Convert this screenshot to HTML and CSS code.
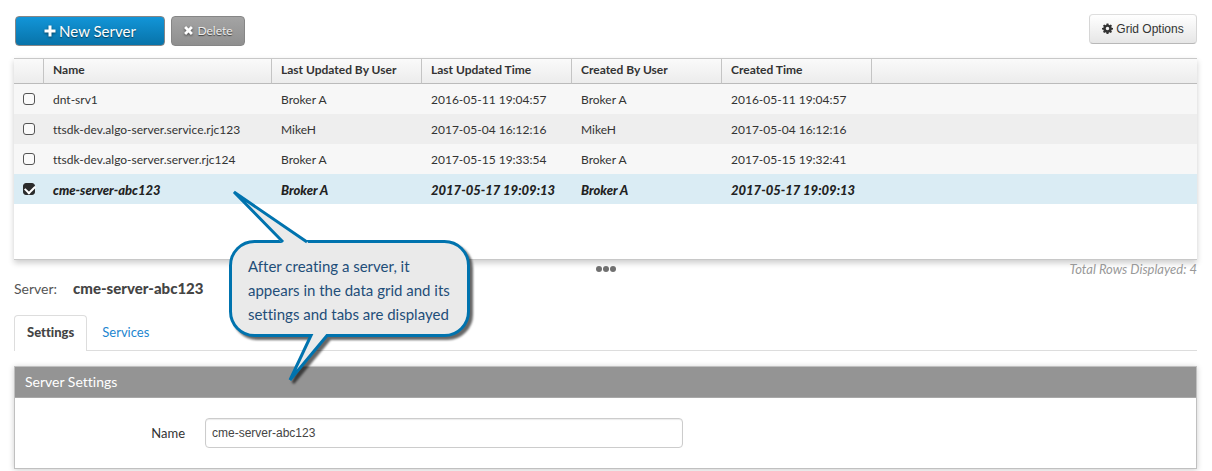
FILE: index.html
```html
<!DOCTYPE html>
<html lang="en">
<head>
    <meta charset="UTF-8">
    <meta name="viewport" content="width=device-width, initial-scale=1.0">
    <title>Servers</title>
    <link rel="stylesheet" href="styles.css">
</head>
<body>
    <!-- Toolbar -->
    <div class="toolbar">
        <button type="button" class="btn btn-primary">
            <svg class="icon-plus" viewBox="0 0 12 12" aria-hidden="true"><path d="M4.500 .5h3v4h4v3h-4v4h-3v-4h-4v-3h4z"/></svg>
            New Server
        </button>
        <button type="button" class="btn btn-delete">
            <svg class="icon-small" viewBox="0 0 10 10" aria-hidden="true"><path d="M2.800 1 5 3.200 7.200 1 9 2.800 6.800 5 9 7.200 7.200 9 5 6.800 2.800 9 1 7.200 3.200 5 1 2.800z"/></svg>
            Delete
        </button>
        <button type="button" class="btn btn-options">
            <svg class="icon-gear" viewBox="0 0 12 12" aria-hidden="true"><path fill-rule="evenodd" d="M5 .5h2l.3 1.500 1 .4 1.300-.8 1.300 1.300-.8 1.300.4 1 1.500.3v1.500l-1.500.4-.4 1 .8 1.200-1.300 1.300-1.300-.8-1 .4-.3 1.500h-2l-.3-1.500-1-.4-1.300.8-1.300-1.300.8-1.200-.4-1-1.500-.4v-1.500l1.500-.3.4-1-.8-1.300 1.300-1.300 1.300.8 1-.4zM6 4.200a1.900 1.900 0 1 0 0 3.800 1.900 1.900 0 0 0 0-3.800z"/></svg>
            Grid Options
        </button>
    </div>

    <!-- Data Grid -->
    <div class="grid">
        <table>
            <colgroup>
                <col class="col-check">
                <col class="col-name">
                <col class="col-data">
                <col class="col-data">
                <col class="col-data">
                <col class="col-data">
                <col>
            </colgroup>
            <thead>
                <tr>
                    <th></th>
                    <th>Name</th>
                    <th>Last Updated By User</th>
                    <th>Last Updated Time</th>
                    <th>Created By User</th>
                    <th>Created Time</th>
                    <th></th>
                </tr>
            </thead>
            <tbody>
                <tr>
                    <td><input type="checkbox" aria-label="Select dnt-srv1"></td>
                    <td>dnt-srv1</td>
                    <td>Broker A</td>
                    <td>2016-05-11 19:04:57</td>
                    <td>Broker A</td>
                    <td>2016-05-11 19:04:57</td>
                    <td></td>
                </tr>
                <tr>
                    <td><input type="checkbox" aria-label="Select ttsdk-dev.algo-server.service.rjc123"></td>
                    <td>ttsdk-dev.algo-server.service.rjc123</td>
                    <td>MikeH</td>
                    <td>2017-05-04 16:12:16</td>
                    <td>MikeH</td>
                    <td>2017-05-04 16:12:16</td>
                    <td></td>
                </tr>
                <tr>
                    <td><input type="checkbox" aria-label="Select ttsdk-dev.algo-server.server.rjc124"></td>
                    <td>ttsdk-dev.algo-server.server.rjc124</td>
                    <td>Broker A</td>
                    <td>2017-05-15 19:33:54</td>
                    <td>Broker A</td>
                    <td>2017-05-15 19:32:41</td>
                    <td></td>
                </tr>
                <tr class="selected">
                    <td><input type="checkbox" aria-label="Select cme-server-abc123" checked></td>
                    <td>cme-server-abc123</td>
                    <td>Broker A</td>
                    <td>2017-05-17 19:09:13</td>
                    <td>Broker A</td>
                    <td>2017-05-17 19:09:13</td>
                    <td></td>
                </tr>
            </tbody>
        </table>
    </div>

    <!-- Splitter and row count -->
    <div class="grid-footer">
        <div class="splitter"><span></span><span></span><span></span></div>
        <div class="total">Total Rows Displayed: 4</div>
    </div>

    <div class="server-title">Server: <strong>cme-server-abc123</strong></div>

    <!-- Tabs -->
    <nav class="tabs">
        <a href="#settings" class="active">Settings</a>
        <a href="#services">Services</a>
    </nav>

    <!-- Settings Form -->
    <section class="panel" id="settings">
        <h2>Server Settings</h2>
        <form class="form-row">
            <label for="server-name">Name</label>
            <input type="text" id="server-name" value="cme-server-abc123">
        </form>
    </section>

    <!-- Callout -->
    <div class="callout">
        <svg viewBox="0 0 250 205" aria-hidden="true">
            <path class="bubble" d="M29.500 56.500H219.500A24 24 0 0 1 243.500 80.500V126.500A24 24 0 0 1 219.500 150.500H102L65 195 86 150.500H29.500A24 24 0 0 1 5.500 126.500V80.500A24 24 0 0 1 29.500 56.500z"/>
            <path class="tail-fill" d="M58 59 9 7 81 55 84 59z"/>
            <path class="tail-line" d="M58 57 9 7 82 57"/>
        </svg>
        <p>After creating a server, it<br>appears in the data grid and its<br>settings and tabs are displayed</p>
    </div>
</body>
</html>
```
FILE: styles.css
```css
/* General Styles */
* {
    margin: 0;
    padding: 0;
    box-sizing: border-box;
}

body {
    position: relative;
    padding: 14px 15px 2px 14px;
    font-family: Lato, "Liberation Sans", sans-serif;
    font-size: 13px;
    font-variant-ligatures: none;
    line-height: 20px;
    color: #333;
    background: #fff;
}

/* Toolbar */
.toolbar {
    display: flex;
    align-items: flex-end;
    gap: 6px;
    height: 32px;
    margin-bottom: 12px;
    padding-left: 1px;
}

.btn {
    display: flex;
    align-items: center;
    justify-content: center;
    height: 30px;
    padding-bottom: 1px;
    border: 1px solid #868686;
    border-radius: 4px;
    font-family: inherit;
    font-size: 12px;
    white-space: nowrap;
    cursor: pointer;
}

.btn svg {
    fill: currentColor;
}

.btn-primary {
    gap: 3px;
    width: 150px;
    font-size: 15px;
    color: #fff;
    text-shadow: 0 1px 1px rgba(0, 0, 0, 0.5);
    background: linear-gradient(#1295d8, #0873a9);
}

.btn-delete {
    gap: 3px;
    width: 74px;
    color: #eee;
    text-shadow: 0 1px 1px rgba(0, 0, 0, 0.6);
    background: linear-gradient(#a4a4a4, #8f8f8f);
}

.btn-primary svg,
.btn-delete svg {
    color: #fff;
    filter: drop-shadow(0 1px 1px rgba(0, 0, 0, 0.5));
}

.btn-options {
    align-self: flex-start;
    gap: 3px;
    width: 108px;
    margin-left: auto;
    border-color: #dedede #d6d6d6 #b8b8b8;
    font-family: "Liberation Sans", Arial, sans-serif;
    color: #333;
    background: linear-gradient(#fff, #e6e6e6);
}

.icon-plus {
    width: 12px;
    height: 12px;
}

.icon-small,
.icon-gear {
    width: 11px;
    height: 11px;
}

/* Data Grid */
.grid {
    height: 202px;
    border-top: 1px solid #c8c8c8;
    border-bottom: 1px solid #c8c8c8;
    background: #fff;
    box-shadow: 0 3px 6px rgba(0, 0, 0, 0.2);
}

table {
    width: 100%;
    table-layout: fixed;
    border-collapse: separate;
    border-spacing: 0;
}

.col-check {
    width: 30px;
}

.col-name {
    width: 228px;
}

.col-data {
    width: 150px;
}

th {
    height: 25px;
    padding: 0 0 2px 9px;
    border-right: 1px solid #c4c4c4;
    border-bottom: 1px solid #bbb;
    font-size: 12px;
    font-weight: 700;
    text-align: left;
    line-height: 20px;
    background: linear-gradient(#fafafa, #ececec);
}

th:last-child {
    border-right: 0;
}

td {
    height: 30px;
    padding: 2px 0 0 9px;
    font-size: 12px;
    line-height: 20px;
    white-space: nowrap;
    background: #f7f7f7;
}

tr:nth-child(even) td {
    background: #eee;
}

tr.selected td {
    font-size: 13px;
    font-style: italic;
    font-weight: 900;
    color: #222;
    background: #daecf4;
}

input[type="checkbox"] {
    display: block;
    position: relative;
    width: 12px;
    height: 12px;
    margin-bottom: 2px;
    border: 1px solid #555;
    border-radius: 3px;
    appearance: none;
    background: #fafafa;
}

input[type="checkbox"]:checked {
    border-color: #2b2b2b;
    background: #2b2b2b;
}

input[type="checkbox"]:checked::after {
    content: "";
    position: absolute;
    top: 1px;
    left: 1px;
    width: 8px;
    height: 5px;
    border: solid #fff;
    border-width: 0 0 2px 2px;
    transform: rotate(-45deg);
}

.grid-footer {
    display: grid;
    grid-template-columns: 1fr auto 1fr;
    height: 18px;
}

.splitter {
    display: flex;
    grid-column: 2;
    gap: 1px;
    padding-top: 6px;
}

.splitter span {
    width: 6px;
    height: 6px;
    border-radius: 50%;
    background: #707070;
}

.total {
    justify-self: end;
    font-style: italic;
    line-height: 18px;
    color: #999;
}

/* Server Title */
.server-title {
    display: flex;
    align-items: baseline;
    gap: 16px;
    height: 20px;
    margin-bottom: 17px;
    font-size: 14px;
    color: #555;
}

.server-title strong {
    font-size: 15px;
    font-weight: 900;
    color: #444;
}

/* Tabs */
.tabs {
    display: flex;
    height: 36px;
    margin-bottom: 15px;
    border-bottom: 1px solid #ddd;
}

.tabs a {
    height: 36px;
    padding: 0 15px;
    line-height: 35px;
    color: #1c86cf;
    text-decoration: none;
}

.tabs a.active {
    padding: 0 12px;
    border: 1px solid #ddd;
    border-bottom: 0;
    border-radius: 4px 4px 0 0;
    line-height: 33px;
    font-weight: 900;
    color: #444;
    background: #fff;
}

/* Settings Form */
.panel {
    border: 1px solid #c0c0c0;
    box-shadow: 0 1px 6px rgba(0, 0, 0, 0.2);
}

.panel h2 {
    height: 31px;
    padding-left: 10px;
    border-bottom: 1px solid #a8a8a8;
    font-size: 14px;
    font-weight: 400;
    line-height: 30px;
    color: #fff;
    background: #949494;
}

.form-row {
    display: flex;
    align-items: center;
    gap: 20px;
    padding: 20px 0;
}

.form-row label {
    width: 170px;
    text-align: right;
}

.form-row input {
    width: 478px;
    height: 30px;
    padding: 0 6px;
    border: 1px solid #ccc;
    border-radius: 4px;
    font-family: "Liberation Sans", Arial, sans-serif;
    font-size: 12px;
    color: #444;
    box-shadow: inset 0 1px 1px rgba(0, 0, 0, 0.08);
}

/* Callout */
.callout {
    position: absolute;
    top: 185px;
    left: 225px;
    width: 250px;
    padding: 69px 0 0 23px;
    font-size: 15px;
    line-height: 24px;
    color: #1f4e79;
}

.callout svg {
    position: absolute;
    top: 0;
    left: 0;
    width: 250px;
    height: 205px;
    overflow: visible;
}

.callout p {
    position: relative;
    white-space: nowrap;
}

.bubble {
    fill: #eaeaea;
    stroke: #0073ae;
    stroke-width: 3px;
    filter: drop-shadow(3px 3px 1px rgba(0, 0, 0, 0.6));
}

.tail-fill {
    fill: #eaeaea;
}

.tail-line {
    fill: none;
    stroke: #0073ae;
    stroke-width: 3px;
}
```
